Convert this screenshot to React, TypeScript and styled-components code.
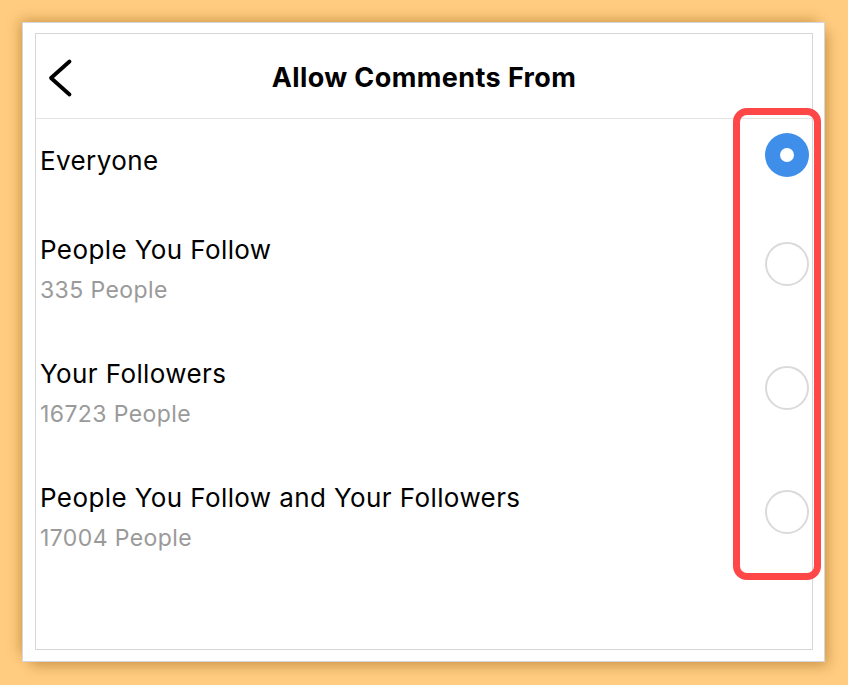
import styled, { createGlobalStyle } from 'styled-components';

const GlobalStyle = createGlobalStyle`
    html, body {
        margin: 0;
        padding: 0;
        background: #ffcc80;
    }
    body {
        font-family: Inter, "Liberation Sans", Arial, sans-serif;
        color: #000;
    }
`;

type Audience = {
    label: string;
    count?: string;
    selected?: boolean;
};

const audiences: Audience[] = [
    { label: 'Everyone', selected: true },
    { label: 'People You Follow', count: '335 People' },
    { label: 'Your Followers', count: '16723 People' },
    { label: 'People You Follow and Your Followers', count: '17004 People' },
];

const Page = styled.div`
    padding: 22px;
    width: 848px;
    height: 685px;
    box-sizing: border-box;
`;

const Card = styled.div`
    width: 803px;
    height: 640px;
    box-sizing: border-box;
    display: flex;
    padding: 10px 11px 11px 12px;
    background: #fff;
    border: 1px solid #d4d7dd;
    box-shadow:
        -5px -5px 12px -3px rgba(150, 95, 10, 0.45),
        6px 7px 12px -3px rgba(150, 95, 10, 0.45);
`;

const Screen = styled.div`
    position: relative;
    flex: 1;
    display: flex;
    flex-direction: column;
    border: 1px solid #d6d6d6;
`;

const Header = styled.div`
    display: grid;
    grid-template-columns: 1fr auto 1fr;
    align-items: center;
    height: 85px;
    box-sizing: border-box;
    padding-top: 4px;
    border-bottom: 1px solid #e3e3e3;
`;

const BackButton = styled.button`
    justify-self: start;
    display: flex;
    margin-left: 11px;
    padding: 0;
    border: none;
    background: none;
    cursor: pointer;
`;

const Title = styled.h1`
    margin: 0;
    font-size: 27px;
    font-weight: 700;
    line-height: 36px;
    letter-spacing: 0.4px;
`;

const OptionList = styled.div`
    display: flex;
    flex-direction: column;
`;

const Option = styled.label<{ $compact: boolean }>`
    display: flex;
    align-items: center;
    justify-content: space-between;
    height: ${({ $compact }) => ($compact ? '72px' : '124px')};
    margin-bottom: ${({ $compact }) => ($compact ? '11px' : '0')};
    padding: 0 3px 0 4px;
    cursor: pointer;
`;

const OptionText = styled.div`
    display: flex;
    flex-direction: column;
    margin-top: 11px;
`;

const OptionLabel = styled.span`
    font-size: 26px;
    line-height: 40px;
    letter-spacing: 0.4px;
    color: #000;
`;

const OptionCount = styled.span`
    font-size: 23px;
    line-height: 40px;
    letter-spacing: 0.4px;
    color: #9a9a9a;
`;

const Radio = styled.span<{ $checked: boolean }>`
    flex: none;
    display: flex;
    align-items: center;
    justify-content: center;
    width: 44px;
    height: 44px;
    box-sizing: border-box;
    border-radius: 50%;
    border: ${({ $checked }) => ($checked ? 'none' : '2px solid #dadada')};
    background: ${({ $checked }) => ($checked ? '#3f8fea' : '#fff')};

    &::after {
        content: '';
        display: ${({ $checked }) => ($checked ? 'block' : 'none')};
        width: 14px;
        height: 14px;
        border-radius: 50%;
        background: #fff;
    }
`;

const Highlight = styled.div`
    position: absolute;
    left: 697px;
    top: 74px;
    width: 88px;
    height: 472px;
    box-sizing: border-box;
    border: 7px solid #ff4747;
    border-radius: 14px;
    pointer-events: none;
`;

const ChevronLeft = () => (
    <svg width='26' height='40' viewBox='0 0 26 40' fill='none'>
        <path
            d='M22.5 3.5 L4 20 L22.5 36.5'
            stroke='#000'
            strokeWidth='3.8'
            strokeLinecap='round'
            strokeLinejoin='round'
        />
    </svg>
);

const App = () => {
    return (
        <Page>
            <GlobalStyle />
            <Card>
                <Screen>
                    <Header>
                        <BackButton aria-label='Back'>
                            <ChevronLeft />
                        </BackButton>
                        <Title>Allow Comments From</Title>
                        <span />
                    </Header>
                    <OptionList>
                        {audiences.map((item) => (
                            <Option key={item.label} $compact={!item.count}>
                                <OptionText>
                                    <OptionLabel>{item.label}</OptionLabel>
                                    {item.count && <OptionCount>{item.count}</OptionCount>}
                                </OptionText>
                                <Radio $checked={!!item.selected} />
                            </Option>
                        ))}
                    </OptionList>
                    <Highlight />
                </Screen>
            </Card>
        </Page>
    );
};

export default App;
